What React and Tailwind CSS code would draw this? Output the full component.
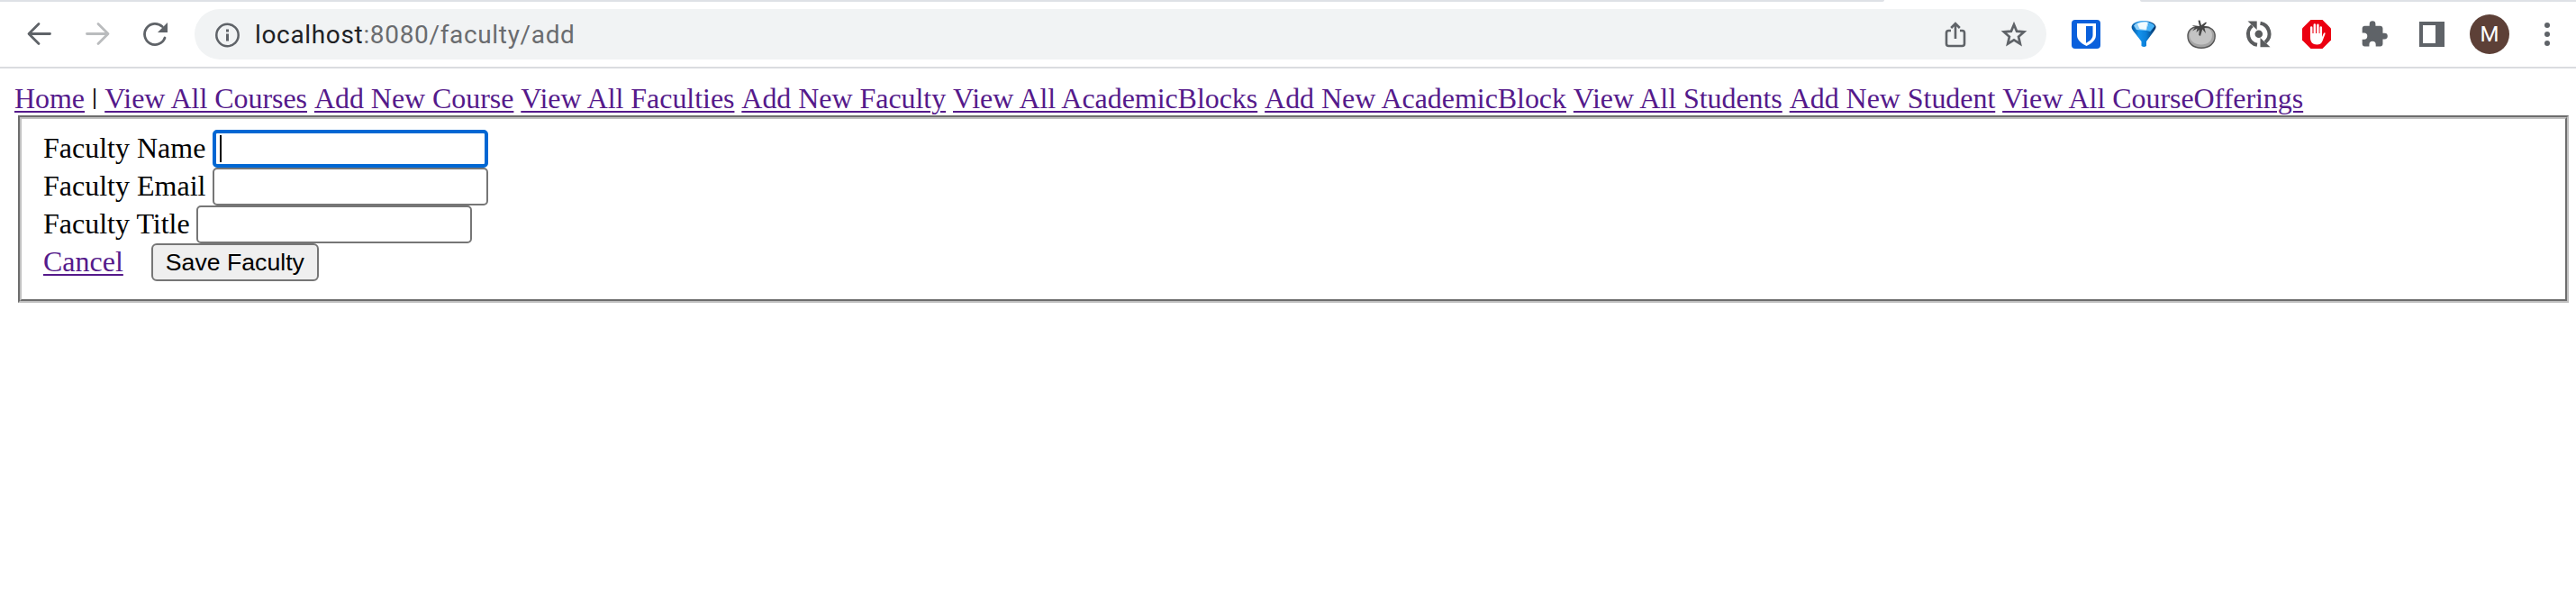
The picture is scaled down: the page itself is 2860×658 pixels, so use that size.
const links = [
  'View All Courses',
  'Add New Course',
  'View All Faculties',
  'Add New Faculty',
  'View All AcademicBlocks',
  'Add New AcademicBlock',
  'View All Students',
  'Add New Student',
  'View All CourseOfferings',
];

function Icon({ className, w, h, children }) {
  return (
    <svg className={`block shrink-0 ${className}`} width={w} height={h} viewBox={`0 0 ${w} ${h}`} fill="none">
      {children}
    </svg>
  );
}

function Toolbar() {
  return (
    <header className="h-[76px] border-b-2 border-[#dadce0] bg-white">
      <div className="flex h-0.5">
        <div className="w-[2092px] rounded-br-[2px] bg-[#dee1e6]" />
        <div className="w-[284px]" />
        <div className="flex-1 rounded-bl-[2px] bg-[#dee1e6]" />
      </div>
      <div className="flex h-[72px] items-center">
        <Icon className="ml-7" w={32} h={32}>
          <path d="M27.500 15.500H4.500M15 4.500l-11 11L15 26.500" stroke="#5f6368" strokeWidth="2.800" strokeLinecap="round" strokeLinejoin="round" />
        </Icon>
        <Icon className="ml-8" w={32} h={32}>
          <path d="M4.500 15.500h23M17 4.500l11 11-11 11" stroke="#babcbe" strokeWidth="2.800" strokeLinecap="round" strokeLinejoin="round" />
        </Icon>
        <Icon className="ml-8" w={32} h={32}>
          <path d="M27 20A11.600 11.600 0 1 1 24.200 7.600" stroke="#5f6368" strokeWidth="2.800" strokeLinecap="round" />
          <path d="M30 3v11H19z" fill="#5f6368" />
        </Icon>
        <div className="ml-7 flex h-14 w-[2056px] items-center rounded-full bg-[#f1f3f4]">
          <Icon className="ml-[22px] mt-px" w={30} h={28}>
            <circle cx="14.500" cy="14" r="12.200" stroke="#5f6368" strokeWidth="2.500" />
            <path d="M14.500 12.500v8M14.500 7.500v3" stroke="#5f6368" strokeWidth="3" />
          </Icon>
          <span className="ml-[15px] mt-0.5 font-[Roboto,sans-serif] text-[28px] leading-8 tracking-[0.66px] text-[#6a6c6f]">
            <span className="text-[#202124]">localhost</span>:8080/faculty/add
          </span>
          <Icon className="ml-auto mr-[35px] mt-0.5" w={28} h={32}>
            <path d="M9 11H6.500a2.500 2.500 0 0 0-2.500 2.500v12a2.500 2.500 0 0 0 2.500 2.500h15a2.500 2.500 0 0 0 2.500-2.500v-12a2.500 2.500 0 0 0-2.500-2.500H19M14 20V3.500M9.200 8 14 3.200 18.800 8" stroke="#5f6368" strokeWidth="2.600" />
          </Icon>
          <Icon className="mr-5" w={32} h={32}>
            <path d="m16 5.200 3.100 7.500 8 .7-6 5.300 1.800 8-6.900-4.300-6.900 4.300 1.800-8-6-5.300 8-.7z" stroke="#5f6368" strokeWidth="2.700" />
          </Icon>
        </div>
        <Icon className="ml-7" w={32} h={32}>
          <rect width="32" height="32" rx="4" fill="#0a60dc" />
          <path d="M6 4h21v13c0 6-5.500 9.500-10.500 12C11.500 26.500 6 23 6 17z" fill="#fff" />
          <path d="M16 7h7.500v10c0 4.200-3.700 6.600-7.500 8.700z" fill="#0a60dc" />
        </Icon>
        <Icon className="ml-8" w={32} h={32}>
          <defs>
            <linearGradient id="funnel" x1="0" x2="1">
              <stop offset="0" stopColor="#04549c" />
              <stop offset=".3" stopColor="#1593ec" />
              <stop offset=".6" stopColor="#0b7fd8" />
              <stop offset="1" stopColor="#032c5c" />
            </linearGradient>
          </defs>
          <path d="M2.700 7C4 3 9.500 1.200 16 1.200S28 3 29.500 7c.3 2-.6 3.500-1.700 5L19 24v5q-2.500 2-5.500 0v-5L4.200 12C3.100 10.500 2.400 9 2.700 7z" fill="url(#funnel)" />
          <path d="M5 6.500C8 3 11.500 2 16 2c2.500 0 4.500.3 6 .8L19.500 12 8 11z" fill="#8fd0fa" />
          <path d="M9 4.500C12 2.500 17 2 20.500 2.700L18.500 11l-7-1z" fill="#f1fbff" />
          <path d="M22 3c3 .7 5.500 2 6.300 4l-5 6-3.800-1z" fill="#46b2f8" />
        </Icon>
        <Icon className="ml-8" w={32} h={32}>
          <path d="M1 18C1 11 6 7.500 12 8q4 1.500 8-.3c6.500-.2 11.200 4 11.200 10.300C31.200 26 25 31.200 16 31.200S1 26 1 18z" fill="#a4a4a4" stroke="#555" strokeWidth="1.400" />
          <path d="M3 17c0-5 4-8 9-7.500q4 1.500 8-.2c5 0 8 3 8 7.700 0 6.500-5 10.500-12 10.500S3 23.500 3 17z" fill="#c3c3c3" />
          <path d="M14 7 12.500.8 14.500.5 16 6l5-3.500 1 .7L19 7l6.500 1-6 1 1.500 6-3.800-4.500L15 18l-1.800-1 .6-6-3.300 3 1-4.500L6 12.500 9.500 8 5.500 6z" fill="#454545" />
        </Icon>
        <Icon className="ml-8" w={32} h={32}>
          <path d="M14 27.700A12 12 0 0 1 8.500 6.500M17.500 3.800A12 12 0 0 1 23 25" stroke="#5a5c5e" strokeWidth="4" />
          <path d="M3.500 1.500h10.200V11zM17.500 20v10.200H28.500z" fill="#5a5c5e" />
          <circle cx="15.800" cy="15.800" r="4.300" fill="#5a5c5e" />
        </Icon>
        <Icon className="ml-8" w={32} h={32}>
          <path d="M9.500 0h13L32 9.500v13L22.500 32h-13L0 22.500v-13z" fill="#eb0011" />
          <path d="M10.200 19V8.500M13.800 17V5.500M17.400 17V5.800M20.800 17V8.500" stroke="#fff" strokeWidth="2.500" strokeLinecap="round" />
          <path d="M9 15h13v4l1.800-4c.8-1.300 2.200-.7 1.700.8L22.500 23.500c-1.300 3-3.300 4-6 4C11.500 27.500 9 24.500 9 20z" fill="#fff" />
        </Icon>
        <Icon className="ml-8" w={32} h={32}>
          <path transform="scale(1.340)" d="M20.500 11H19V7c0-1.100-.9-2-2-2h-4V3.500a2.500 2.500 0 0 0-5 0V5H4c-1.100 0-2 .9-2 2v3.800h1.500a2.700 2.700 0 0 1 0 5.400H2V20c0 1.100.9 2 2 2h3.800v-1.500a2.700 2.700 0 0 1 5.400 0V22H17c1.100 0 2-.9 2-2v-4h1.500a2.500 2.500 0 0 0 0-5z" fill="#5f6368" />
        </Icon>
        <Icon className="ml-8" w={32} h={32}>
          <path fillRule="evenodd" d="M2 2h28v28H2zM6 6v20h14V6z" fill="#5f6368" />
        </Icon>
        <div className="ml-[26px] flex size-11 shrink-0 items-center justify-center rounded-full bg-[#5d4037] font-[Roboto,sans-serif] text-[24px] text-white">M</div>
        <Icon className="ml-[26px]" w={32} h={32}>
          <circle cx="16" cy="6" r="3" fill="#5f6368" />
          <circle cx="16" cy="16" r="3" fill="#5f6368" />
          <circle cx="16" cy="26" r="3" fill="#5f6368" />
        </Icon>
      </div>
    </header>
  );
}

function Field({ label, focused }) {
  return (
    <label className="flex h-[42px] items-center gap-[7.500px]">
      <span className="pb-[3px] leading-9">{label}</span>
      {focused ? (
        <span className="flex h-[42px] w-[306px] items-center rounded-[5px] border-4 border-[#0067d3] bg-white pl-1">
          <span className="h-[30px] w-0.5 bg-black" />
        </span>
      ) : (
        <span className="h-[42px] w-[306px] rounded-[5px] border-2 border-[#767676] bg-white" />
      )}
    </label>
  );
}

const link = 'text-[#551a8b] underline decoration-2 underline-offset-[3px]';

export default function App() {
  return (
    <div className="h-[658px] overflow-hidden bg-white font-['Liberation_Serif',serif] text-[32px] text-black">
      <Toolbar />
      <nav className="flex h-[52px] items-start gap-[7.900px] whitespace-nowrap pl-4 pt-[15px] leading-9 tracking-[-0.05px]">
        <a className={link}>Home</a>
        <span className="flex w-[6.400px] justify-center pt-px text-[25px] font-bold leading-8">|</span>
        {links.map((l) => (
          <a key={l} className={link}>{l}</a>
        ))}
      </nav>
      <main className="ml-5 mr-2 h-[208px] border-2 border-b-[#c0c0c0] border-l-[#6d6d6d] border-r-[#c0c0c0] border-t-[#6d6d6d]">
        <div className="h-full border-2 border-b-[#6d6d6d] border-l-[#c0c0c0] border-r-[#6d6d6d] border-t-[#c0c0c0] pl-6 pt-3">
          <Field label="Faculty Name" focused />
          <Field label="Faculty Email" />
          <Field label="Faculty Title" />
          <div className="flex h-[42px] items-center">
            <a className={`pb-0.5 ${link}`}>Cancel</a>
            <button className="ml-[31px] h-[42px] w-[186px] whitespace-nowrap rounded-[6px] border-2 border-[#767676] bg-[#efefef] font-['Liberation_Sans',sans-serif] text-[26.670px] leading-8">Save Faculty</button>
          </div>
        </div>
      </main>
    </div>
  );
}
